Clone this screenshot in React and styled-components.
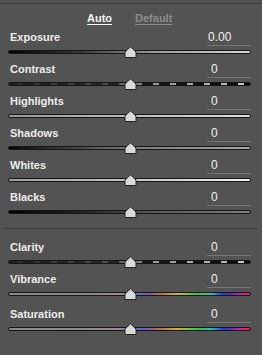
import React from "react";
import styled, { createGlobalStyle } from "styled-components";

const GlobalStyle = createGlobalStyle`
  html, body { margin: 0; padding: 0; background: #535353; }
  body { font-family: "Liberation Sans", Arial, sans-serif; }
`;

const Panel = styled.div`
  width: 262px;
  height: 355px;
  background: #535353;
  padding-top: 3px;
  box-sizing: border-box;
  overflow: hidden;
`;

const Rule = styled.div`
  height: 1px;
  background: #3d3d3d;
  margin: ${(p) => p.$margin || "0"};
`;

const Header = styled.div`
  height: 25px;
  display: flex;
  align-items: center;
  padding-left: 87px;
  gap: 23px;
  box-sizing: border-box;
  padding-top: 3px;
`;

const Tab = styled.span`
  font-size: 11px;
  font-weight: bold;
  color: ${(p) => (p.$active ? "#f2f2f2" : "#8c8c8c")};
  text-decoration: underline;
  text-underline-offset: 2px;
`;

const Row = styled.div`
  height: ${(p) => (p.$tall ? 35 : 32)}px;
  padding: 0 11px 0 8px;
  box-sizing: border-box;
`;

const LabelLine = styled.div`
  height: 16px;
  display: flex;
  align-items: center;
  justify-content: space-between;
`;

const Label = styled.span`
  padding-left: 2px;
  font-size: 11px;
  font-weight: bold;
  color: #ececec;
`;

const Value = styled.div`
  width: 44px;
  height: 17px;
  box-sizing: border-box;
  border-bottom: 1px solid #767676;
  padding-left: ${(p) => (p.$wide ? 1 : 4)}px;
  font-size: 12px;
  line-height: 16px;
  color: #f0f0f0;
  margin-top: 1px;
`;

const SliderArea = styled.div`
  position: relative;
  height: 14px;
  display: flex;
  align-items: center;
`;

const Track = styled.div`
  width: 100%;
  height: 4px;
  border-radius: 2px;
  box-sizing: border-box;
  border: 1px solid #161616;
  background: ${(p) => p.$bg};
`;

const Thumb = styled.svg`
  position: absolute;
  left: 50%;
  top: 1px;
  margin-left: -6px;
  width: 13px;
  height: 12px;
  overflow: visible;
`;

const dashes = (base) =>
  `repeating-linear-gradient(90deg, ${base} 0 8px, #c8c8c8 8px 14px, ${base} 14px 17px)`;

const TRACKS = {
  exposure: "linear-gradient(90deg, #000 0%, #3a3a3a 30%, #9a9a9a 60%, #d8d8d8 100%)",
  contrast: `linear-gradient(90deg, rgba(30,30,30,0.92) 0%, rgba(45,45,45,0.8) 40%, rgba(40,40,40,0.3) 60%, rgba(0,0,0,0) 100%), ${dashes("#0c0c0c")}`,
  highlights: "linear-gradient(90deg, #9a9a9a 0%, #bdbdbd 50%, #dedede 100%)",
  shadows: "linear-gradient(90deg, #000 0%, #2a2a2a 15%, #7a7a7a 50%, #a8a8a8 100%)",
  whites: "linear-gradient(90deg, #a0a0a0 0%, #c4c4c4 50%, #f2f2f2 100%)",
  blacks: "linear-gradient(90deg, #000 0%, #222 30%, #5a5a5a 60%, #7e7e7e 100%)",
  color:
    "linear-gradient(90deg, #8a8a8a 0%, #8c8a8c 30%, #9a8a92 46%, #5a78c8 52%, #7060a8 57%, #b87058 63%, #c8b838 70%, #48c048 78%, #30b8c0 84%, #2838d0 89%, #7828c0 93%, #d02890 97%, #e01848 100%)",
};

const SliderRow = ({ label, value, track, tall }) => (
  <Row $tall={tall}>
    <LabelLine>
      <Label>{label}</Label>
      <Value $wide={value.length > 1}>{value}</Value>
    </LabelLine>
    <SliderArea>
      <Track $bg={TRACKS[track]} />
      <Thumb viewBox="0 0 13 12">
        <path
          d="M1 11.5 L1 6 L6.5 0.8 L12 6 L12 11.5 Z"
          fill="#d9d9d9"
          stroke="#262626"
          strokeWidth="1"
          strokeLinejoin="round"
        />
      </Thumb>
    </SliderArea>
  </Row>
);

export default function App() {
  return (
    <Panel>
      <GlobalStyle />
      <Rule />
      <Header>
        <Tab $active>Auto</Tab>
        <Tab>Default</Tab>
      </Header>
      <SliderRow label="Exposure" value="0.00" track="exposure" />
      <SliderRow label="Contrast" value="0" track="contrast" />
      <SliderRow label="Highlights" value="0" track="highlights" />
      <SliderRow label="Shadows" value="0" track="shadows" />
      <SliderRow label="Whites" value="0" track="whites" />
      <SliderRow label="Blacks" value="0" track="blacks" />
      <Rule $margin="7px 4px 10px 3px" />
      <SliderRow label="Clarity" value="0" track="contrast" />
      <SliderRow label="Vibrance" value="0" track="color" tall />
      <SliderRow label="Saturation" value="0" track="color" />
    </Panel>
  );
}
